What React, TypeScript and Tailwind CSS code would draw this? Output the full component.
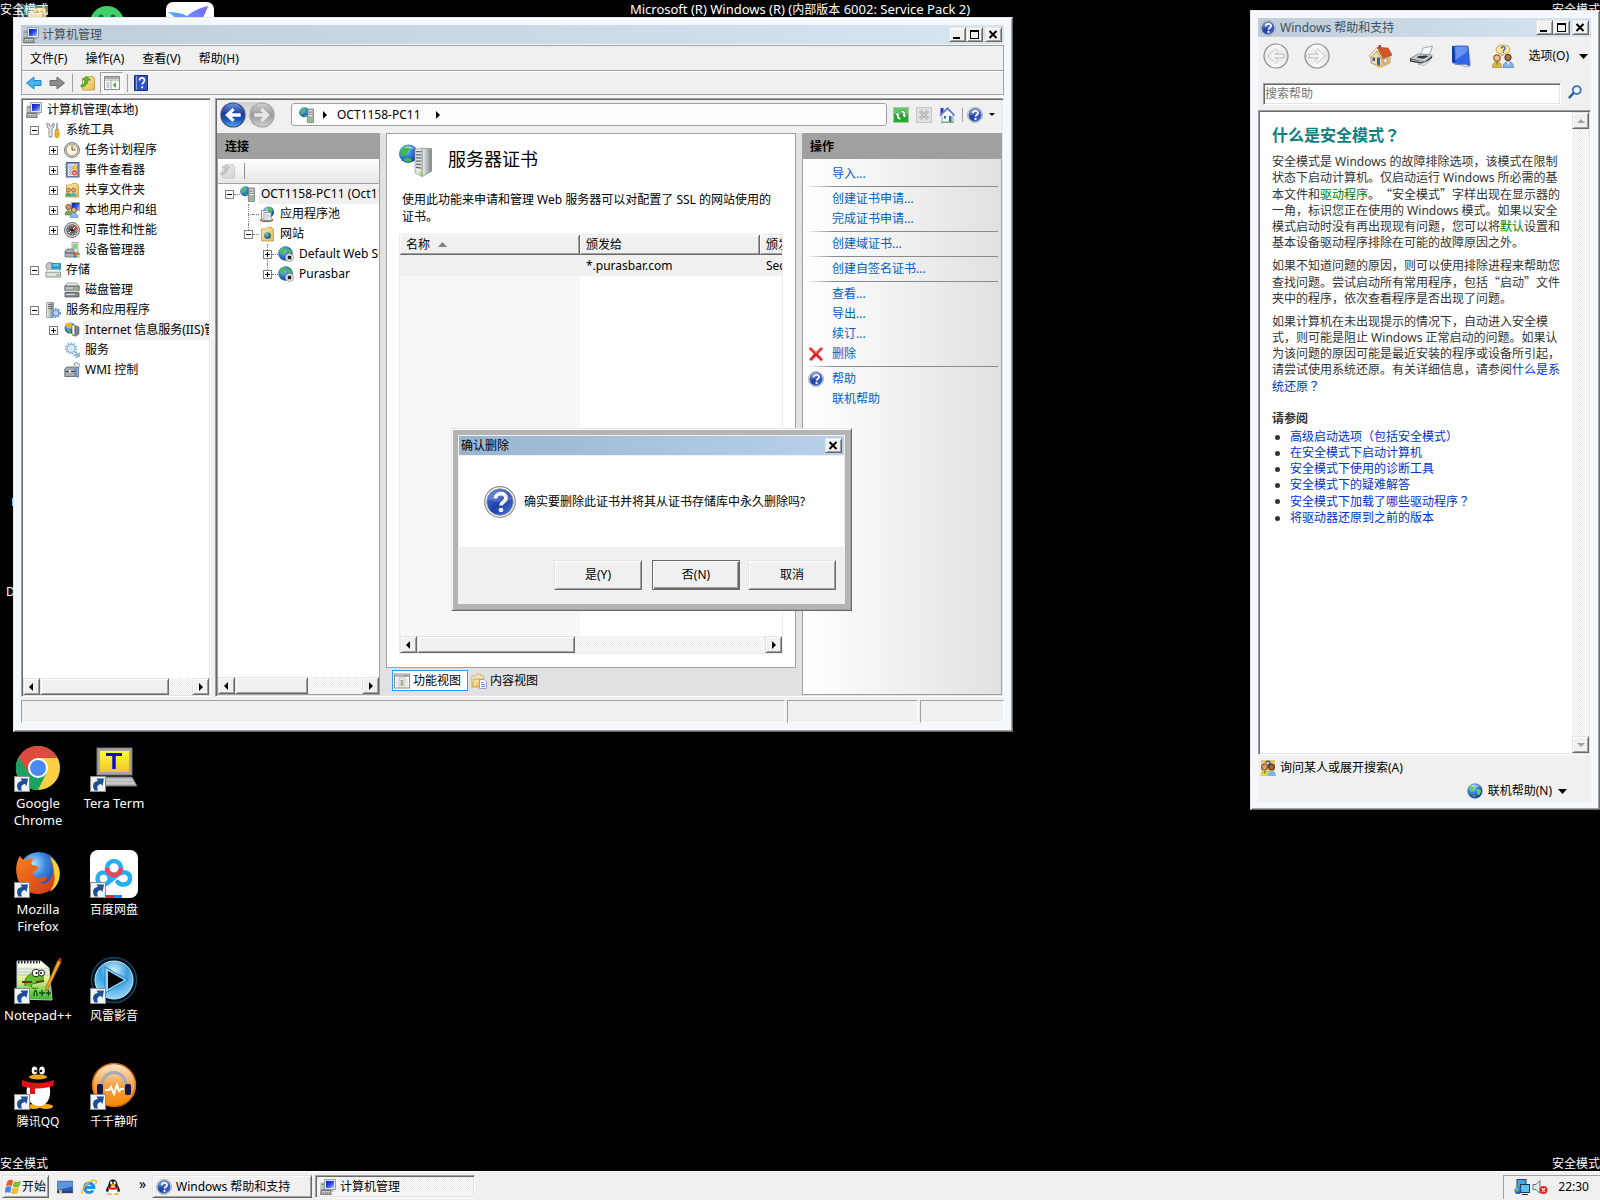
import React from "react";

const raised =
  "border border-t-[#e3e3e3] border-l-[#e3e3e3] border-r-[#696969] border-b-[#696969] shadow-[inset_1px_1px_#fff,inset_-1px_-1px_#a0a0a0] bg-[#f0f0f0]";
const sunken =
  "border border-t-[#a0a0a0] border-l-[#a0a0a0] border-r-white border-b-white shadow-[inset_1px_1px_#696969,inset_-1px_-1px_#e3e3e3]";
const checker =
  "bg-[repeating-conic-gradient(#ffffff_0_25%,#ebebeb_0_50%)] bg-[length:2px_2px]";
const windowFrame =
  "border border-t-[#e3e3e3] border-l-[#e3e3e3] border-r-[#696969] border-b-[#696969] shadow-[inset_1px_1px_#fff,inset_-1px_-1px_#a0a0a0] bg-[#f4f7fc] p-[7px] pr-2";

type IconProps = { className?: string };

/* Gradients shared by every icon */
function Defs() {
  return (
    <svg className="absolute size-0" aria-hidden="true">
      <defs>
        <linearGradient id="blue" x1="0" y1="0" x2="0" y2="1">
          <stop offset="0" stopColor="#6b97e0" />
          <stop offset=".45" stopColor="#1b3b9c" />
          <stop offset=".7" stopColor="#1d55c0" />
          <stop offset="1" stopColor="#4fb0f5" />
        </linearGradient>
        <linearGradient id="help" x1="0" y1="0" x2="1" y2="1">
          <stop offset="0" stopColor="#5f86dd" />
          <stop offset=".5" stopColor="#1d3ea6" />
          <stop offset="1" stopColor="#4a78dc" />
        </linearGradient>
        <linearGradient id="screen" x1="0" y1="0" x2="1" y2="1">
          <stop offset="0" stopColor="#0a17b0" />
          <stop offset=".5" stopColor="#2a49ea" />
          <stop offset="1" stopColor="#b7ccff" />
        </linearGradient>
        <linearGradient id="folder" x1="0" y1="0" x2="1" y2="1">
          <stop offset="0" stopColor="#fdeeb0" />
          <stop offset="1" stopColor="#e3b850" />
        </linearGradient>
        <linearGradient id="metal" x1="0" y1="0" x2="1" y2="0">
          <stop offset="0" stopColor="#f1f3f4" />
          <stop offset="1" stopColor="#7d8588" />
        </linearGradient>
        <radialGradient id="globe" cx=".35" cy=".3" r=".8">
          <stop offset="0" stopColor="#b9e4ff" />
          <stop offset=".4" stopColor="#3a86e0" />
          <stop offset="1" stopColor="#0d2f8c" />
        </radialGradient>
        <linearGradient id="gray" x1="0" y1="0" x2="0" y2="1">
          <stop offset="0" stopColor="#cfcfcf" />
          <stop offset=".5" stopColor="#9a9a9a" />
          <stop offset="1" stopColor="#d2d2d2" />
        </linearGradient>
        <linearGradient id="pale" x1="0" y1="0" x2="0" y2="1">
          <stop offset="0" stopColor="#ffffff" />
          <stop offset=".5" stopColor="#e2e2e2" />
          <stop offset="1" stopColor="#ffffff" />
        </linearGradient>
        <linearGradient id="orange" x1="0" y1="0" x2="0" y2="1">
          <stop offset="0" stopColor="#ffe9d2" />
          <stop offset=".5" stopColor="#f2a24a" />
          <stop offset="1" stopColor="#f88600" />
        </linearGradient>
        <radialGradient id="media" cx=".5" cy=".25" r=".8">
          <stop offset="0" stopColor="#d6f0ff" />
          <stop offset=".45" stopColor="#3b9ee0" />
          <stop offset="1" stopColor="#9fe0ff" />
        </radialGradient>
        <linearGradient id="fox" x1="0" y1="0" x2="1" y2="1">
          <stop offset="0" stopColor="#f58220" />
          <stop offset=".6" stopColor="#e2521b" />
          <stop offset="1" stopColor="#c8371a" />
        </linearGradient>
        <linearGradient id="yellow" x1="0" y1="0" x2="0" y2="1">
          <stop offset="0" stopColor="#ffff30" />
          <stop offset="1" stopColor="#f2c430" />
        </linearGradient>
        <linearGradient id="note" x1="0" y1="0" x2="0" y2="1">
          <stop offset="0" stopColor="#ffffff" />
          <stop offset=".45" stopColor="#e8f29a" />
          <stop offset="1" stopColor="#35b52a" />
        </linearGradient>
        <linearGradient id="bird" x1="0" y1="0" x2="1" y2="0">
          <stop offset="0" stopColor="#4ab4f8" />
          <stop offset="1" stopColor="#7d6cf5" />
        </linearGradient>
      </defs>
    </svg>
  );
}

function Svg({ className = "size-4", box = "0 0 16 16", children }: IconProps & { box?: string; children: React.ReactNode }) {
  return (
    <svg className={"shrink-0 " + className} viewBox={box} aria-hidden="true">
      {children}
    </svg>
  );
}

function ComputerIcon() {
  return (
    <Svg>
      <rect x="4.500" y=".5" width="11" height="10" fill="#e4e6e8" stroke="#a0a5aa" />
      <rect x="6" y="2" width="8" height="7" fill="url(#screen)" />
      <path d="M1 4h3v7H1z" fill="#c7cbd0" stroke="#85898d" strokeWidth=".7" />
      <path d="M8 10.500h5l1 2H7z" fill="#9da2a6" />
      <path d="M1 11h9l1.500 4.500H.5z" fill="#7d8286" stroke="#565b60" strokeWidth=".6" />
      <path d="M2 12.500h8M1.500 14h9" stroke="#e6e8ea" strokeDasharray="1.500 .6" />
      <path d="M2 5.500h1.500" stroke="#2fb52f" />
    </Svg>
  );
}
function ToolsIcon() {
  return (
    <Svg>
      <path d="M2 1v4l2 1.500V15h3V6.500L9 5V1L7.500 2v2h-3V2z" fill="#e9ebec" stroke="#74797d" strokeWidth=".8" />
      <path d="M12 1v7" stroke="#8b8f93" strokeWidth="1.500" />
      <path d="M10.500 7.500h3v2l.5 1v4l-1 1.200h-2l-1-1.200v-4l.5-1z" fill="#f3b229" stroke="#b97a12" strokeWidth=".6" />
    </Svg>
  );
}
function ClockIcon() {
  return (
    <Svg>
      <circle cx="8" cy="8" r="7.500" fill="#cfd1d3" stroke="#76797c" />
      <circle cx="8" cy="8" r="5.700" fill="#fff6d8" stroke="#8a7f68" strokeWidth=".7" />
      <path d="M8 8V3.500A4.500 4.500 0 0 1 12.500 8z" fill="#f5dc94" />
      <path d="M8 3.700V8h3.500" stroke="#4a5a78" fill="none" />
    </Svg>
  );
}
function EventIcon() {
  return (
    <Svg>
      <rect x="2.500" y=".5" width="12.500" height="14.500" fill="#7d97cc" stroke="#4a5f96" />
      <rect x="4" y="2" width="9" height="12" fill="#dfe8f6" />
      <path d="M5 4h4M5 6h4M5 8h3M5 10h3M5 12h3" stroke="#7f97c4" strokeWidth=".8" />
      <path d="m11 2.500 2.700 4.500H8.300z" fill="#ffd21f" stroke="#b98a00" strokeWidth=".5" />
      <circle cx="10.500" cy="10.800" r="2.700" fill="#e4554a" />
      <path d="m9.500 9.800 2 2m0-2-2 2" stroke="#fff" strokeWidth=".8" />
      <path d="M1 2.500h2.500M1 5.500h2.500M1 8.500h2.500M1 11.500h2.500" stroke="#8e9296" />
    </Svg>
  );
}
function Folder() {
  return <path d="M2.500 3h5l1-1.500h4.500v1.500h1.500v12h-12z" fill="url(#folder)" stroke="#c4993a" strokeWidth=".8" />;
}
function SharedIcon() {
  return (
    <Svg>
      <Folder />
      <circle cx="4.500" cy="8" r="2" fill="#e0a977" stroke="#7b4b22" strokeWidth=".6" />
      <circle cx="9.500" cy="8" r="2" fill="#e0a977" stroke="#7b4b22" strokeWidth=".6" />
      <path d="M1 14.500c0-5 6.500-5 6.500 0z" fill="#53a46c" />
      <path d="M6.500 14.500c0-5 6-5 6 0z" fill="#4fb2bd" />
    </Svg>
  );
}
function UsersIcon() {
  return (
    <Svg>
      <rect x="7.500" y=".5" width="8" height="8" fill="url(#screen)" stroke="#a4a8ac" />
      <circle cx="4.500" cy="5" r="2.700" fill="#d89c63" stroke="#67401c" strokeWidth=".8" />
      <path d="M1 13c0-6 7-6 7 0z" fill="#79a955" stroke="#4e7434" strokeWidth=".5" />
      <circle cx="10" cy="8" r="2.600" fill="#e2b184" stroke="#5c3a1c" strokeWidth=".8" />
      <path d="M6 15.500c0-6.500 8-6.500 8 0z" fill="#86b8ea" stroke="#4673a6" strokeWidth=".5" />
    </Svg>
  );
}
function GaugeIcon() {
  return (
    <Svg>
      <circle cx="8" cy="8" r="7.500" fill="#d8dadb" stroke="#6b6e70" />
      <circle cx="8" cy="8" r="5.800" fill="#5d5f61" />
      <circle cx="8" cy="8" r="4.300" fill="none" stroke="#e7e7e7" strokeDasharray="1.500 1" />
      <path d="M9 2.500A5.500 5.500 0 0 1 13.500 7L11 7.500 9 5z" fill="#e23b2e" />
      <path d="m5 11 6-6" stroke="#fff" />
      <circle cx="8" cy="8" r="1.300" fill="#222" />
    </Svg>
  );
}
function DeviceIcon() {
  return (
    <Svg>
      <path d="M8 .5h6V11H8z" fill="#dfe2e4" stroke="#999da0" strokeWidth=".8" />
      <path d="M9 2h4v5H9z" fill="#8ccb77" />
      <path d="m1 9 2-2h6l1 2v6H1z" fill="#a8b1b8" stroke="#5b646b" strokeWidth=".7" />
      <path d="M1 11h9" stroke="#4b545b" />
      <path d="M10 10.500h2.700v2.500H10z" fill="#e24a2c" />
      <path d="M13 10.500h2.700v2.500H13z" fill="#5ab534" />
      <path d="M10 13.200h2.700v2.500H10z" fill="#2d78d2" />
      <path d="M13 13.200h2.700v2.500H13z" fill="#f2bb22" />
    </Svg>
  );
}
function StorageIcon() {
  return (
    <Svg>
      <circle cx="5" cy="4.500" r="4" fill="#c9cdd0" stroke="#85898d" />
      <circle cx="5" cy="4.500" r="1.300" fill="#fff" stroke="#777" strokeWidth=".5" />
      <rect x="7" y="1.500" width="8.500" height="6" fill="#2aa2cf" stroke="#1b6d8c" strokeWidth=".7" />
      <path d="M8 3h6" stroke="#9fe4f7" />
      <path d="M1 10h14.500v5H1z" fill="#dfe1e2" stroke="#76797b" strokeWidth=".8" />
      <path d="m2 8.500 1-1h11l1 2.500H1z" fill="#f3f4f5" stroke="#a0a3a5" strokeWidth=".5" />
      <rect x="11.500" y="12" width="2.500" height="1.500" fill="#4fd22d" />
    </Svg>
  );
}
function DiskIcon() {
  return (
    <Svg>
      <path d="m1 4 2-3h10l2 3z" fill="#eceded" stroke="#85888a" strokeWidth=".7" />
      <path d="M.8 4h14.500v4.500H.8z" fill="#9c9fa1" stroke="#55585a" strokeWidth=".7" />
      <path d="m1.500 8.500 12.500 0 1 2h-14z" fill="#d2d4d5" />
      <path d="M1 10.500h14V15H1z" fill="#85888a" stroke="#4b4e50" strokeWidth=".7" />
      <path d="M2 6h7M2 12.500h9" stroke="#e4e6e7" />
      <rect x="12" y="5" width="2" height="2" fill="#5fe033" />
    </Svg>
  );
}
function Gear({ cx, cy, r, fill }: { cx: number; cy: number; r: number; fill: string }) {
  return (
    <g>
      <circle cx={cx} cy={cy} r={r} fill="none" stroke={fill} strokeWidth="2" strokeDasharray="1.600 1.300" />
      <circle cx={cx} cy={cy} r={r - 1.3} fill="#eef5fb" stroke={fill} strokeWidth="1.400" />
      <circle cx={cx} cy={cy} r={r / 4} fill="#fff" stroke={fill} strokeWidth=".6" />
    </g>
  );
}
function ServiceAppIcon() {
  return (
    <Svg>
      <path d="M1.500.5h7v15h-7z" fill="url(#metal)" stroke="#80888c" strokeWidth=".7" />
      <path d="M3 2.500h4M3 4.500h4M3 6.500h4" stroke="#687176" />
      <Gear cx={11} cy={11} r={4} fill="#6c9cc9" />
    </Svg>
  );
}
function GearsIcon() {
  return (
    <Svg>
      <Gear cx={7} cy={6.5} r={5.2} fill="#8db9dc" />
      <Gear cx={13} cy={13} r={2.4} fill="#84a9c8" />
    </Svg>
  );
}
function IisIcon() {
  return (
    <Svg>
      <circle cx="6" cy="6" r="5.500" fill="url(#globe)" />
      <path d="M1 1h6l2 3-3 3-3-2z" fill="#f5b81c" />
      <path d="M3 8c2-2 4 0 4 3-2 0-4-1-4-3z" fill="#49bf33" />
      <path d="M8 3h3v11l-3-2z" fill="#eef0f1" stroke="#6c7376" strokeWidth=".6" />
      <path d="M11 3.500 15 5v7l-4 2.500z" fill="#7d8487" stroke="#555b5e" strokeWidth=".6" />
      <path d="M9 12.500v1.500" stroke="#32c832" strokeWidth="1.500" />
    </Svg>
  );
}
function WmiIcon() {
  return (
    <Svg>
      <path d="m.8 7 2-2h7l1.500 2v7.500H.8z" fill="#a4abb1" stroke="#555c63" strokeWidth=".8" />
      <path d="M1 9.500h10" stroke="#41484e" />
      <path d="M5 8.500h2v2H5z" fill="#e7e9ea" />
      <path d="M10 1.500 13 .5l3 2-1 2.500-2 1-2-1z" fill="#dfe2e4" stroke="#7b8287" strokeWidth=".7" />
      <path d="M12 5.500h2.500V15h-2.500z" fill="#8fb6ea" stroke="#375f9c" strokeWidth=".7" />
    </Svg>
  );
}
function ServerIcon() {
  return (
    <Svg>
      <circle cx="5.200" cy="5.200" r="5" fill="url(#globe)" />
      <path d="M1.500 5c0-2.500 2.500-4 4-3.500S5 4 4 6.500 1.500 7 1.500 5zM5 9c.5-1.500 2.500-1.500 3-1s-1 2-3 1.500z" fill="#3fc04a" />
      <rect x="8.300" y="2" width="6.200" height="13.500" fill="#a9b0b3" stroke="#6c7376" strokeWidth=".7" />
      <path d="M9.500 4h4M9.500 6.200h4M9.500 8.400h4" stroke="#f1f3f4" strokeWidth="1.100" />
      <path d="M9.500 5.100h4M9.500 7.300h4" stroke="#5d6568" strokeWidth=".6" />
      <rect x="11.300" y="12.500" width="2.200" height="1.800" fill="#5fe01e" />
    </Svg>
  );
}
function ServerLargeIcon() {
  return (
    <Svg className="size-[33px]" box="0 0 32 32">
      <circle cx="9" cy="9.500" r="9" fill="url(#globe)" />
      <path d="M1.500 9c0-4 4-7.500 8-7 2.500.5 1.500 2.500 0 4s-1.500 4-4 5.500-4 0-4-2.500zM4 15c2-2 7-2 8.500 0S7 19 4 15z" fill="#3fbb3f" />
      <path d="M5 4c3-3 8-2 10 1-4-1-7-1-10-1z" fill="#fff" opacity=".5" />
      <path d="m15.500 5 7-1v27.500l-7-3.500z" fill="#e3e6e7" stroke="#81888b" strokeWidth=".6" />
      <path d="m22.500 4 9 .5v22l-9 5z" fill="url(#metal)" stroke="#6f7679" strokeWidth=".6" />
      <path d="M16.500 7.500h5M16.500 10.500h5M16.500 13.500h5M16.500 16.500h5M16.500 19.500l5 .5M16.500 22.500l5 .8" stroke="#5e6669" strokeWidth="1.200" />
      <rect x="20" y="27" width="2.500" height="2.500" fill="#7cf01e" />
    </Svg>
  );
}
function AppPoolIcon() {
  return (
    <Svg>
      <circle cx="9.500" cy="6" r="5.500" fill="url(#globe)" />
      <path d="M8 2c3-2 5 0 6 3-2 2-4 0-6-3z" fill="#4cc35a" />
      <path d="M1 12c0 4 13 4 13 0v2.500c-2 2-11 2-13 0z" fill="#cd3d33" />
      <rect x="2.500" y="4.500" width="7" height="8.500" fill="#fff" stroke="#8a8f95" />
      <rect x="5" y="6.500" width="7" height="8" fill="#fff" stroke="#8a8f95" />
      <path d="M6.500 9h4M6.500 11h4M6.500 13h3" stroke="#7d98b8" strokeWidth=".8" />
    </Svg>
  );
}
function SitesIcon() {
  return (
    <Svg>
      <Folder />
      <circle cx="8.500" cy="9.500" r="3.300" fill="url(#globe)" />
      <path d="M6 9c1-2 4-2 4 0s-2 3-4 0z" fill="#4cc33a" />
    </Svg>
  );
}
function SiteIcon() {
  return (
    <Svg>
      <circle cx="7.500" cy="7.500" r="7" fill="url(#globe)" stroke="#3a6a8f" strokeWidth=".5" />
      <path d="M2 5c2-4 6-4 6-2s-2 2-2 5-3 1-4-3zM9 3c3 0 5 2 5 4l-3 0z" fill="#4fbe3c" />
      <circle cx="11.500" cy="11.500" r="4" fill="#f4f4f4" stroke="#8c8c8c" strokeWidth=".8" />
      <rect x="9.700" y="9.700" width="3.600" height="3.600" fill="#222" />
    </Svg>
  );
}
function HelpIcon({ className }: IconProps) {
  return (
    <Svg className={className} box="0 0 32 32">
      <circle cx="16" cy="16" r="15.300" fill="#fff" stroke="#8a8a8a" strokeWidth="1.200" />
      <circle cx="16" cy="16" r="13.300" fill="url(#help)" stroke="#9aa0a8" strokeWidth=".8" />
      <path d="M4 13a12.500 12.500 0 0 1 24 0c-8 4-16 4-24 0z" fill="#fff" opacity=".18" />
      <path d="M11.500 12.500c0-6.500 10.500-6.500 10.500-.5 0 4-5 3.800-5 7.500" fill="none" stroke="#f4f5f8" strokeWidth="3.800" />
      <circle cx="17" cy="24" r="2.300" fill="#f4f5f8" />
    </Svg>
  );
}
function ArrowIcon({ gray = false }: { gray?: boolean }) {
  return gray ? (
    <Svg>
      <path d="M1 5.500h7V2l7.500 6L8 14v-3.500H1z" fill="#8e8e8e" stroke="#6d6d6d" />
    </Svg>
  ) : (
    <Svg>
      <path d="M15 5.500H8V2L.5 8 8 14v-3.500h7z" fill="#3fb4ee" stroke="#2384c4" />
    </Svg>
  );
}
function UpFolderIcon({ faded = false }: { faded?: boolean }) {
  return (
    <Svg className={faded ? "size-4 grayscale opacity-50" : "size-4"}>
      <Folder />
      <path d="M1 10c3 0 4-3 4-5H2.500L6.500 1l4 4H8c0 4-3 7-7 7z" fill="#4dc02e" stroke="#2b861a" strokeWidth=".6" />
    </Svg>
  );
}
function PanelIcon() {
  return (
    <Svg>
      <rect x=".5" y="1.500" width="15" height="13" fill="#fff" stroke="#8b8b8b" />
      <path d="M1 2h14v2.500H1z" fill="#a9a9a9" />
      <path d="M1 5.500h14" stroke="#c9c9c9" />
      <path d="M2.500 8h3M2.500 10h3M2.500 12h3" stroke="#8698b5" />
      <path d="M7 5v10" stroke="#a3a3a3" />
      <path d="M12 7v6L8.500 10z" fill="#3cc038" />
    </Svg>
  );
}
function BookHelpIcon() {
  return (
    <Svg>
      <path d="M1.500.5h13v15h-13z" fill="#2d53c4" stroke="#16307c" />
      <path d="M3.500 1v14" stroke="#86a4ef" />
      <path d="M6.500 5.500c0-3.500 5-3.500 5 0 0 2-2.300 2-2.300 4" fill="none" stroke="#fff" strokeWidth="1.700" />
      <circle cx="9.200" cy="12.300" r="1.100" fill="#fff" />
    </Svg>
  );
}
function RefreshIcon() {
  return (
    <Svg>
      <rect x=".5" y=".5" width="15" height="15" fill="#1fae2b" stroke="#a5c9a5" />
      <path d="M1 1h14v6H1z" fill="#63c968" />
      <path d="M1.500 8.500 4.500 5l3 3.500H6c0 1.500.5 2 2 2v2.500c-3 0-4.500-1.500-4.500-4.500z" fill="#fff" stroke="#0f6e18" strokeWidth=".6" />
      <path d="M14.500 7.500 11.500 11l-3-3.500H10c0-1.500-.5-2-2-2V3c3 0 4.500 1.500 4.500 4.500z" fill="#fff" stroke="#0f6e18" strokeWidth=".6" />
    </Svg>
  );
}
function StopIcon() {
  return (
    <Svg>
      <rect x=".5" y=".5" width="15" height="15" fill="#e0e0e0" stroke="#c6c6c6" />
      <path d="m4 4 8 8m0-8-8 8" stroke="#b0b0b0" strokeWidth="3" />
      <path d="m4 4 8 8m0-8-8 8" stroke="#d6d6d6" strokeWidth="1" />
    </Svg>
  );
}
function HomeSmallIcon() {
  return (
    <Svg>
      <path d="M3 7.500 8.500 2.500 14 7.500V15H3z" fill="#f5f6fa" stroke="#7d86a3" strokeWidth=".8" />
      <path d="M1.500 1h3v3.500l-3 3z" fill="#2536b8" />
      <path d="m.8 8.500 7.700-7.500 7 7.500" fill="none" stroke="#5a6fd8" strokeWidth="1.400" />
      <path d="M5 9h2v2.500H5zM10 9h2.500v6H10z" fill="#2a6e9c" />
      <path d="M2 15.500h13" stroke="#7ab06a" />
    </Svg>
  );
}
function DeleteIcon() {
  return (
    <Svg>
      <path d="M2.500 1 8 5.800 13 1l2 1.800L10 8l5 5.500-2 1.800-5-5L3.500 15 1 13.500 5.800 8 .8 3z" fill="#dd1f1c" stroke="#f0a5a0" strokeWidth=".7" />
      <path d="M3 2.500 8 7l4.500-4" fill="none" stroke="#f6756e" strokeWidth="1" />
    </Svg>
  );
}
function FeatureViewIcon() {
  return (
    <Svg>
      <rect x=".5" y="1" width="15" height="14" fill="#fff" stroke="#8c8c8c" />
      <path d="M1 1.500h14V4H1z" fill="#b5b5b5" />
      <path d="M10 2.700h4" stroke="#6d6d6d" strokeDasharray="1 .7" />
      <rect x="5" y="5" width="6" height="9.500" fill="#f4f4e2" stroke="#9a9a9a" strokeWidth=".6" />
      <path d="M6.500 8h3M6.500 10h3M6.500 12h3" stroke="#555" strokeWidth=".9" />
      <path d="M2 7h2M2 9.500h2M2 12h2M12 7h2M12 9.500h2M12 12h2" stroke="#aac2e4" strokeWidth=".9" />
    </Svg>
  );
}
function ContentViewIcon() {
  return (
    <Svg>
      <path d="M.8 3h4l1-2h4v2h3v9H.8z" fill="#f3e6bb" stroke="#c0a461" strokeWidth=".7" />
      <path d="m.8 14 2.200-8h9v8z" fill="url(#folder)" stroke="#b9923d" strokeWidth=".7" />
      <path d="M8.500 6.500h4.500l2.500 2.500v6.500h-7z" fill="#fff" stroke="#8792a5" strokeWidth=".8" />
      <path d="M10 9.500h2.500M10 11.500h4M10 13.500h4" stroke="#5b86c9" strokeWidth=".9" />
    </Svg>
  );
}
function GlobeIcon() {
  return (
    <Svg>
      <circle cx="8" cy="8" r="7.300" fill="url(#globe)" stroke="#325f86" strokeWidth=".5" />
      <path d="M2.500 5c1.500-3 4.500-3.500 5-2S6.500 5 5.500 7.500 2.500 8 2.500 5zM10 6.500c2-1 4 0 4 1.500s-1.500 4.500-2.500 4.500-2.500-5-1.500-6zM6 12c1.500 0 2.500 1 2.500 2-1.500 0-2.500-.8-2.500-2z" fill="#5fcf4c" />
      <path d="M3 3.500c3-3 7-3 10 0-3 1-7 1-10 0z" fill="#fff" opacity=".4" />
    </Svg>
  );
}
function HouseIcon() {
  return (
    <Svg className="size-6" box="0 0 24 24">
      <path d="M3 11 9 7l13 3v9l-9 4-10-4z" fill="#f2d9a4" stroke="#a57b45" strokeWidth=".7" />
      <path d="M13 13.500V23l9-4v-9z" fill="#dcb978" />
      <path d="M10.500 1H13v5h-2.500z" fill="#a6452b" />
      <path d="M9 3.500 20 4l4 7-10 3.500z" fill="#d4572c" stroke="#943a1c" strokeWidth=".6" />
      <path d="M9 3.500 1 12l1.500 1.500L9 7l4.500 8 1-1z" fill="#f7f1e6" stroke="#a76a4a" strokeWidth=".6" />
      <path d="M4.500 13.500h2.500V17H4.500z" fill="#2e62a4" />
      <path d="M9 13.500h3V22l-3-1z" fill="#2b64b0" />
      <path d="M16 15.500 19 14.500V18l-3 1z" fill="#fff" stroke="#9a7a4a" strokeWidth=".5" />
      <path d="M7 21.500 11 24l2-1-4-2.500z" fill="#f0b64a" />
    </Svg>
  );
}
function PrinterIcon() {
  return (
    <Svg className="size-6" box="0 0 24 24">
      <path d="m14 4 9.500-2-3.500 10-9 .5z" fill="#fbfcfd" stroke="#8f949b" strokeWidth=".8" />
      <path d="m1 14.500 8-4.500 12 .5 2.500 1.500-7.500 6z" fill="#c9cccf" stroke="#6c7175" strokeWidth=".7" />
      <path d="m9.500 12 8-.5 2 .8-5 2.500-7-1z" fill="#34383b" />
      <path d="M1 14.500v3L13.500 20l9.500-6v-2l-7.500 6z" fill="#2c3033" />
      <path d="m2 16 11.500 2" stroke="#c4c8cb" />
      <path d="m9 20.500 8-2.500 5-2.500-6.500 6z" fill="#e3e6e9" stroke="#94999d" strokeWidth=".6" />
    </Svg>
  );
}
function BookIcon() {
  return (
    <Svg className="size-6" box="0 0 24 24">
      <path d="m18 4 3 16.500-3 1.500-2-2z" fill="#d8dbe3" stroke="#9a9fb0" strokeWidth=".6" />
      <path d="M2 2h2.500l1 18L2 18.500z" fill="#0f3db0" />
      <path d="M4.500 2H18l1.500 20L16 20.500l-10.500 0z" fill="#2f66e8" stroke="#1a3da0" strokeWidth=".7" />
      <path d="M5 2.500h12.500v5L5.500 16z" fill="#7ea6f8" opacity=".7" />
      <path d="M2 18.500 16.500 23l3-1-3.500-1.500H5.500z" fill="#e8ebf4" stroke="#7684b4" strokeWidth=".6" />
    </Svg>
  );
}
function PeopleIcon({ className = "size-6" }: IconProps) {
  return (
    <Svg className={className} box="0 0 24 24">
      <path d="M5 5.500C5-.5 19-.5 19 5.500c0 3-3 4.500-6 4.500l-2 2-.5-2.200C7 9.500 5 8 5 5.500z" fill="#fae4a0" stroke="#b98e3c" strokeWidth=".8" />
      <path d="M10.500 4.500c0-2.500 3.500-2.500 3.500 0 0 1.200-1.700 1.200-1.700 2.500" stroke="#2a56b8" strokeWidth="1.300" fill="none" />
      <circle cx="12.300" cy="8.300" r=".8" fill="#2a56b8" />
      <circle cx="6" cy="14" r="3.200" fill="#eec193" stroke="#a3581f" strokeWidth="1.200" />
      <path d="M1.500 23.500c0-8 9-8 9 0z" fill="#dfb439" stroke="#9c771c" strokeWidth=".6" />
      <circle cx="17" cy="13.500" r="3.200" fill="#a7734b" stroke="#4a2c18" strokeWidth="1" />
      <path d="M12 23.500c0-8 10.500-8 10.500 0z" fill="#7fb4e6" stroke="#3f74ab" strokeWidth=".6" />
      <path d="M5 18h2l-1 4z" fill="#4d8f3c" />
      <path d="M16 17.500h2.500l-1 4z" fill="#fff" />
    </Svg>
  );
}
function AskIcon() {
  return (
    <Svg>
      <rect x="1" y="0" width="14" height="15" fill="#e9c671" />
      <path d="M6 3c0-2.500 4-2.500 4 0 0 1.500-2 1.500-2 3" fill="none" stroke="#2a56b8" strokeWidth="1.400" />
      <circle cx="4.500" cy="7" r="3" fill="#d9a06c" stroke="#7a3d12" strokeWidth="1" />
      <circle cx="11.500" cy="7" r="3" fill="#9b6740" stroke="#3c2212" strokeWidth="1" />
      <path d="M.5 16c0-7 8-7 8 0z" fill="#e8cf3a" />
      <path d="M7.500 16c0-7 8.500-7 8.500 0z" fill="#7fb4e6" />
      <path d="m3.500 11 1.500 3 1-3z" fill="#4d8f3c" />
    </Svg>
  );
}
function SearchIcon() {
  return (
    <Svg className="size-3.5">
      <circle cx="10" cy="5.800" r="4.500" fill="#f4f8fd" stroke="#3d74c4" strokeWidth="2.200" />
      <path d="m6.500 9-5.500 6" stroke="#2d5aa4" strokeWidth="2.600" />
    </Svg>
  );
}
function NavCircle({ dir, tone }: { dir: "back" | "forward"; tone: "blue" | "gray" | "pale" }) {
  const fill = tone === "blue" ? "url(#blue)" : tone === "gray" ? "url(#gray)" : "url(#pale)";
  const stroke = tone === "blue" ? "#3a4f78" : tone === "gray" ? "#a6a6a6" : "#8f8f8f";
  const arrow = tone === "pale" ? "#f6f6f6" : tone === "gray" ? "#e9e9e9" : "#ffffff";
  const line = tone === "pale" ? "#b9b9b9" : "none";
  return (
    <Svg className="size-[26px]" box="0 0 26 26">
      <circle cx="13" cy="13" r="12" fill={fill} stroke={stroke} strokeWidth="1.200" />
      {dir === "back" ? (
        <path d="M5 13l7.500-7 2.200 2.200-3 3.100h9v3.400h-9l3 3.100-2.200 2.200z" fill={arrow} stroke={line} strokeWidth=".8" />
      ) : (
        <path d="M21 13l-7.500-7-2.200 2.200 3 3.100h-9v3.400h9l-3 3.100 2.200 2.200z" fill={arrow} stroke={line} strokeWidth=".8" />
      )}
    </Svg>
  );
}
function Triangle({ dir, className = "" }: { dir: "left" | "right" | "up" | "down"; className?: string }) {
  const d = { left: "M5 0v8L1 4z", right: "M2 0v8l4-4z", up: "M0 6h8L4 2z", down: "M0 2h8L4 6z" }[dir];
  return (
    <svg className={"size-2 shrink-0 " + className} viewBox="0 0 8 8" fill="currentColor" aria-hidden="true">
      <path d={d} />
    </svg>
  );
}

/* Title bar controls */
function CaptionButton({ kind, className = "" }: { kind: "min" | "max" | "close"; className?: string }) {
  const label = { min: "最小化", max: "最大化", close: "关闭" }[kind];
  return (
    <button type="button" aria-label={label} className={"grid h-[15px] w-[17px] place-items-center " + raised + " " + className}>
      <svg className="size-[11px]" viewBox="0 0 11 11" aria-hidden="true">
        {kind === "min" && <path d="M1 8h7v2H1z" />}
        {kind === "max" && <path d="M1 1h9v9H1zM2 3v6h7V3z" fillRule="evenodd" />}
        {kind === "close" && <path d="m1.500 2 7 7M8.500 2l-7 7" stroke="#000" strokeWidth="2" />}
      </svg>
    </button>
  );
}
function Captions() {
  return (
    <div className="ml-auto flex pr-0.5">
      <CaptionButton kind="min" />
      <CaptionButton kind="max" />
      <CaptionButton kind="close" className="ml-0.5" />
    </div>
  );
}

function HScroll({ thumb }: { thumb: string }) {
  return (
    <div className={"flex h-[17px] shrink-0 " + checker}>
      <button type="button" aria-label="向左滚动" className={"grid w-[17px] place-items-center " + raised}>
        <Triangle dir="left" />
      </button>
      <div className={thumb + " " + raised} />
      <button type="button" aria-label="向右滚动" className={"ml-auto grid w-[17px] place-items-center " + raised}>
        <Triangle dir="right" />
      </button>
    </div>
  );
}

/* Tree rows */
const indent = ["pl-[3px]", "pl-[7px]", "pl-[26px]", "pl-[45px]"];
const railLeft = ["left-2", "left-[11px]", "left-[30px]", "left-[49px]"];
type Row = {
  level: number;
  label: string;
  icon: React.ReactNode;
  open?: boolean;
  selected?: boolean;
  rail?: "full" | "half";
};
function TreeRow({ row, lines }: { row: Row; lines?: boolean }) {
  const dots = lines ? "border-t border-dotted border-[#808080]" : "";
  return (
    <li role="treeitem" aria-selected={!!row.selected} className={"relative flex h-5 items-center " + indent[row.level]}>
      {row.rail && (
        <span
          className={
            "absolute top-0 border-l border-dotted border-[#808080] " +
            railLeft[row.level] +
            (row.rail === "full" ? " h-full" : " h-1/2")
          }
        />
      )}
      {row.level > 0 &&
        (row.open === undefined ? (
          <span className={"ml-1 w-[5px] shrink-0 " + dots} />
        ) : (
          <button
            type="button"
            aria-label={row.open ? "折叠" : "展开"}
            className="relative grid size-[9px] shrink-0 place-items-center border border-[#808080] bg-white"
          >
            <svg className="size-[7px]" viewBox="0 0 7 7" aria-hidden="true">
              <path d={row.open ? "M1 3h5v1H1z" : "M1 3h2V1h1v2h2v1H4v2H3V4H1z"} />
            </svg>
          </button>
        ))}
      {row.level > 0 && <span className={"w-1.5 shrink-0 " + dots} />}
      {row.icon}
      <span className={"ml-[3px] flex h-5 items-center pl-0.5 whitespace-nowrap " + (row.selected ? "grow bg-[#f0f0f0]" : "")}>{row.label}</span>
    </li>
  );
}

const leftTree: Row[] = [
  { level: 0, label: "计算机管理(本地)", icon: <ComputerIcon /> },
  { level: 1, label: "系统工具", icon: <ToolsIcon />, open: true },
  { level: 2, label: "任务计划程序", icon: <ClockIcon />, open: false },
  { level: 2, label: "事件查看器", icon: <EventIcon />, open: false },
  { level: 2, label: "共享文件夹", icon: <SharedIcon />, open: false },
  { level: 2, label: "本地用户和组", icon: <UsersIcon />, open: false },
  { level: 2, label: "可靠性和性能", icon: <GaugeIcon />, open: false },
  { level: 2, label: "设备管理器", icon: <DeviceIcon /> },
  { level: 1, label: "存储", icon: <StorageIcon />, open: true },
  { level: 2, label: "磁盘管理", icon: <DiskIcon /> },
  { level: 1, label: "服务和应用程序", icon: <ServiceAppIcon />, open: true },
  { level: 2, label: "Internet 信息服务(IIS)管理器", icon: <IisIcon />, open: false, selected: true },
  { level: 2, label: "服务", icon: <GearsIcon /> },
  { level: 2, label: "WMI 控制", icon: <WmiIcon /> },
];
const iisTree: Row[] = [
  { level: 1, label: "OCT1158-PC11 (Oct1158)", icon: <ServerIcon />, open: true, selected: true },
  { level: 2, label: "应用程序池", icon: <AppPoolIcon />, rail: "full" },
  { level: 2, label: "网站", icon: <SitesIcon />, open: true, rail: "half" },
  { level: 3, label: "Default Web Site", icon: <SiteIcon />, open: false, rail: "full" },
  { level: 3, label: "Purasbar", icon: <SiteIcon />, open: false, rail: "half" },
];

type Action = { label: string; icon?: React.ReactNode };
const actionGroups: Action[][] = [
  [{ label: "导入..." }],
  [{ label: "创建证书申请..." }, { label: "完成证书申请..." }],
  [{ label: "创建域证书..." }],
  [{ label: "创建自签名证书..." }],
  [{ label: "查看..." }, { label: "导出..." }, { label: "续订..." }, { label: "删除", icon: <DeleteIcon /> }],
  [{ label: "帮助", icon: <HelpIcon /> }, { label: "联机帮助" }],
];

function PaneHeader({ children }: { children: React.ReactNode }) {
  return <h2 className="flex h-[26px] shrink-0 items-center bg-[#a0a0a0] pt-0.5 pl-[7px] font-bold">{children}</h2>;
}

function Connections() {
  return (
    <section className="flex w-[163px] shrink-0 flex-col overflow-hidden border-r border-b border-l border-[#a0a0a0] bg-white">
      <PaneHeader>连接</PaneHeader>
      <div className="flex h-[25px] shrink-0 items-center gap-2 border-b border-[#a0a0a0] bg-linear-to-b from-white to-[#e6e6e6] pl-0.5">
        <button type="button" aria-label="向上" disabled>
          <UpFolderIcon faded />
        </button>
        <span className="h-4 w-px bg-[#909090]" />
      </div>
      <ul role="tree" aria-label="连接" className="grow">
        {iisTree.map((row) => (
          <TreeRow key={row.label} row={row} lines />
        ))}
      </ul>
      <HScroll thumb="w-[73px]" />
    </section>
  );
}

const th = "h-5 border-r border-b border-r-[#696969] border-b-[#696969] bg-[#f0f0f0] pl-1.5 text-left font-normal shadow-[inset_1px_1px_#fff,inset_-1px_-1px_#a0a0a0]";

function Certificates() {
  return (
    <div className="flex min-w-0 grow flex-col">
      <section className="flex grow flex-col border border-[#a0a0a0] bg-white px-3 pt-2.5 pb-[13px]">
        <div className="flex h-[34px] items-start">
          <ServerLargeIcon />
          <h1 className="pl-4 text-[18px] leading-[30px]">服务器证书</h1>
        </div>
        <p className="mt-[13px] pl-[3px] leading-[17px]">
          使用此功能来申请和管理 Web 服务器可以对配置了 SSL 的网站使用的
          <br />
          证书。
        </p>
        <div className="mt-[9px] flex grow flex-col overflow-hidden border border-[#ebebeb]">
          <div className="grow overflow-hidden bg-[linear-gradient(to_right,#f7f7f7_180px,#fff_180px)]">
            <table className="w-[540px] table-fixed border-separate border-spacing-0">
              <thead>
                <tr>
                  <th scope="col" className={th}>
                    <span className="flex items-center gap-2">
                      名称
                      <svg className="h-[5px] w-[9px]" viewBox="0 0 9 5" aria-hidden="true"><path d="M0 5h9L4.500 0z" fill="#808080" /></svg>
                    </span>
                  </th>
                  <th scope="col" className={th}>颁发给</th>
                  <th scope="col" className={th}>颁发者</th>
                </tr>
              </thead>
              <tbody>
                <tr className="h-[21px] bg-[#f0f0f0]">
                  <td />
                  <td className="pl-1.5">*.purasbar.com</td>
                  <td className="pl-1.5">Sectigo</td>
                </tr>
              </tbody>
            </table>
          </div>
          <HScroll thumb="w-[158px]" />
        </div>
      </section>
      <div className="flex h-[27px] items-start gap-[3px] pt-0.5 pl-1.5" role="tablist">
        <button type="button" role="tab" aria-selected="true" className="flex h-[21px] items-center gap-[3px] border border-[#3399ff] bg-white pr-1.5 pl-px">
          <FeatureViewIcon />
          功能视图
        </button>
        <button type="button" role="tab" aria-selected="false" className="flex h-[21px] items-center gap-[3px]">
          <ContentViewIcon />
          内容视图
        </button>
      </div>
    </div>
  );
}

function Actions() {
  return (
    <section className="flex w-[200px] shrink-0 flex-col border-r border-b border-l border-[#a0a0a0] bg-linear-to-r from-white to-[#e1e1e1]">
      <PaneHeader>操作</PaneHeader>
      <div className="pt-[5px] pr-[3px] pl-0.5">
        {actionGroups.map((group, i) => (
          <React.Fragment key={i}>
            {i > 0 && <div className="my-0.5 h-px bg-linear-to-r from-transparent to-[#8a8a8a] to-15%" />}
            <ul>
              {group.map((a) => (
                <li key={a.label} className="flex h-5 items-center pl-[3px]">
                  <span className="w-6 shrink-0">{a.icon}</span>
                  <a href="#" className="text-[#0060c8]">{a.label}</a>
                </li>
              ))}
            </ul>
          </React.Fragment>
        ))}
      </div>
    </section>
  );
}

function ManagementWindow() {
  const panel = "h-[23px] border border-t-[#a0a0a0] border-l-[#a0a0a0] border-r-white border-b-white";
  return (
    <section aria-label="计算机管理" className={"absolute top-[17px] left-[13px] w-[62.5vw] min-w-[900px] " + windowFrame}>
      <header className="flex h-[19px] items-center bg-linear-to-r from-[#bfcddb] to-[#d7e4f2] pl-0.5 text-[#434e54]">
        <ComputerIcon />
        <span className="pl-[3px]">计算机管理</span>
        <Captions />
      </header>
      <div className="mt-px border border-[#a0a0a0] bg-[#f0f0f0]">
        <nav className="flex h-[25px] items-center gap-[18px] border-b border-[#a0a0a0] pt-px pl-2">
          {["文件(F)", "操作(A)", "查看(V)", "帮助(H)"].map((m) => (
            <button type="button" key={m}>{m}</button>
          ))}
        </nav>
        <div className="flex h-[23px] items-center border-t border-white pl-1">
          <button type="button" aria-label="后退"><ArrowIcon /></button>
          <button type="button" aria-label="前进" className="ml-[7px]"><ArrowIcon gray /></button>
          <span className="mx-[7px] h-[18px] w-px bg-[#a0a0a0]" />
          <button type="button" aria-label="向上"><UpFolderIcon /></button>
          <button type="button" aria-label="显示/隐藏控制台树" className={"ml-1 grid h-[22px] w-[23px] place-items-center border border-t-[#a0a0a0] border-l-[#a0a0a0] border-r-white border-b-white " + checker}>
            <PanelIcon />
          </button>
          <span className="mr-[5px] ml-1 h-[18px] w-px bg-[#a0a0a0]" />
          <button type="button" aria-label="帮助"><BookHelpIcon /></button>
        </div>
      </div>
      <div className="mt-[3px] flex min-h-[599px] bg-[#f0f0f0]">
        <section className={"flex w-[190px] shrink-0 flex-col overflow-hidden bg-white p-px " + sunken}>
          <ul role="tree" aria-label="控制台树" className="grow overflow-hidden">
            {leftTree.map((row) => (
              <TreeRow key={row.label} row={row} />
            ))}
          </ul>
          <HScroll thumb="w-[129px]" />
        </section>
        <div className={"ml-1 flex min-w-0 grow flex-col bg-[#e1e1e1] p-px " + sunken}>
          <div className="flex h-[33px] shrink-0 items-center bg-[#f0f0f0] pb-1 pl-[3px]">
            <div className="flex gap-[3px] rounded-full bg-linear-to-b from-[#d0d0d0] to-[#f0f0f0]">
              <button type="button" aria-label="后退"><NavCircle dir="back" tone="blue" /></button>
              <button type="button" aria-label="前进"><NavCircle dir="forward" tone="gray" /></button>
            </div>
            <div className="ml-4 flex h-[23px] grow items-center rounded-[3px] border border-[#a0a0a0] bg-[#fdfdfd] pl-[7px]">
              <ServerIcon />
              <Triangle dir="right" className="mr-2 ml-1.5" />
              <span>OCT1158-PC11</span>
              <Triangle dir="right" className="ml-[13px]" />
            </div>
            <div className="flex items-center pr-[7px] pl-1.5">
              <button type="button" aria-label="刷新"><RefreshIcon /></button>
              <button type="button" aria-label="停止" className="ml-[7px]"><StopIcon /></button>
              <button type="button" aria-label="主页" className="ml-[7px]"><HomeSmallIcon /></button>
              <span className="ml-[7px] h-3.5 w-px bg-[#a0a0a0]" />
              <button type="button" aria-label="帮助" className="ml-1 flex items-center gap-1.5">
                <HelpIcon />
                <svg className="size-[6px]" viewBox="0 0 6 6" aria-hidden="true"><path d="M0 1h6L3 4z" /></svg>
              </button>
            </div>
          </div>
          <div className="flex grow gap-1.5">
            <Connections />
            <Certificates />
            <Actions />
          </div>
        </div>
      </div>
      <footer className="flex gap-0.5 bg-[#f0f0f0] pt-[3px] pb-px">
        <div className={"grow " + panel} />
        <div className={"w-[131px] " + panel} />
        <div className={"w-[84px] " + panel} />
      </footer>
    </section>
  );
}

function ConfirmDialog() {
  const btn = "h-[30px] w-[88px] ";
  return (
    <section
      role="dialog"
      aria-labelledby="confirm-title"
      className="absolute top-[428px] left-[451px] w-[401px] border border-t-[#e3e3e3] border-l-[#e3e3e3] border-r-[#696969] border-b-[#696969] bg-[#b4b4b4] p-1.5 shadow-[inset_1px_1px_#fff,inset_-1px_-1px_#a0a0a0]"
    >
      <div className="border border-[#f0f0f0] bg-[#f0f0f0]">
        <header className="flex h-[19px] items-center bg-linear-to-r from-[#99b4d1] to-[#b9d1ea] pl-0.5">
          <h2 id="confirm-title">确认删除</h2>
          <CaptionButton kind="close" className="mr-0.5 ml-auto" />
        </header>
        <div className="mt-px flex h-[91px] items-center gap-2 bg-white pl-[25px]">
          <HelpIcon className="size-8" />
          <p>确实要删除此证书并将其从证书存储库中永久删除吗?</p>
        </div>
        <div className="flex justify-end pt-[13px] pr-2 pb-[13px]">
          <button type="button" className={btn + raised}>是(Y)</button>
          <button type="button" className="ml-2.5 h-[30px] w-[88px] border border-[#696969] bg-[#f0f0f0] shadow-[inset_1px_1px_#fff,inset_-1px_-1px_#696969,inset_-2px_-2px_#a0a0a0]">
            否(N)
          </button>
          <button type="button" className={"ml-2 " + btn + raised}>取消</button>
        </div>
      </div>
    </section>
  );
}

/* Full-width punctuation: quotes, and the centred question mark */
function Quote({ children }: { children: React.ReactNode }) {
  return <span className="font-['Noto_Sans_CJK_SC',sans-serif]">{children}</span>;
}
function Question() {
  return <span lang="ja" className="font-['Noto_Sans_CJK_JP',sans-serif]">？</span>;
}

const seeAlso: React.ReactNode[] = [
  "高级启动选项（包括安全模式）",
  "在安全模式下启动计算机",
  "安全模式下使用的诊断工具",
  "安全模式下的疑难解答",
  <>安全模式下加载了哪些驱动程序<Question /></>,
  "将驱动器还原到之前的版本",
];

function HelpWindow() {
  return (
    <section aria-label="Windows 帮助和支持" className={"absolute top-2.5 right-0 w-[350px] " + windowFrame}>
      <header className="flex h-[19px] items-center bg-linear-to-r from-[#bfcddb] to-[#d7e4f2] pl-0.5 text-[#434e54]">
        <HelpIcon />
        <span className="pl-1">Windows 帮助和支持</span>
        <Captions />
      </header>
      <div className="bg-[#f0f0f0]">
        <div className="flex h-[39px] items-center pr-[3px] pb-px pl-[5px]">
          <button type="button" aria-label="后退"><NavCircle dir="back" tone="pale" /></button>
          <button type="button" aria-label="前进" className="ml-[15px]"><NavCircle dir="forward" tone="pale" /></button>
          <div className="ml-auto flex items-center gap-[17px]">
            <button type="button" aria-label="主页"><HouseIcon /></button>
            <button type="button" aria-label="打印"><PrinterIcon /></button>
            <button type="button" aria-label="浏览帮助"><BookIcon /></button>
            <button type="button" aria-label="询问"><PeopleIcon /></button>
          </div>
          <button type="button" className="ml-[13px] flex items-center gap-2.5">
            选项(O)
            <svg className="h-[5px] w-[9px]" viewBox="0 0 9 5" aria-hidden="true"><path d="M0 0h9L4.500 5z" /></svg>
          </button>
        </div>
        <form className="flex items-center pt-[7px] pr-[9px] pl-[5px]" role="search">
          <input
            type="text"
            aria-label="搜索帮助"
            placeholder="搜索帮助"
            className={"h-[22px] min-w-0 grow bg-white px-px pb-0.5 placeholder:text-[#767676] " + sunken}
          />
          <button type="button" aria-label="搜索" className="ml-[7px] pb-1"><SearchIcon /></button>
        </form>
        <div className={"mt-[5px] flex min-h-[645px] bg-white p-px " + sunken}>
          <article className="grow pt-2.5 pl-3 text-[#333] whitespace-nowrap [text-spacing-trim:space-all]">
            <h1 className="text-base leading-6 font-bold text-[#0e8080]">什么是安全模式<Question /></h1>
            <p className="mt-[7px]">
              安全模式是 Windows 的故障排除选项，该模式在限制<br />
              状态下启动计算机。仅启动运行 Windows 所必需的基<br />
              本文件和<a href="#" className="text-[#008000]">驱动程序</a>。<Quote>“</Quote>安全模式<Quote>”</Quote>字样出现在显示器的<br />
              一角，标识您正在使用的 Windows 模式。如果以安全<br />
              模式启动时没有再出现现有问题，您可以将<a href="#" className="text-[#008000]">默认</a>设置和<br />
              基本设备驱动程序排除在可能的故障原因之外。
            </p>
            <p className="mt-[7px]">
              如果不知道问题的原因，则可以使用排除进程来帮助您<br />
              查找问题。尝试启动所有常用程序，包括<Quote>“</Quote>启动<Quote>”</Quote>文件<br />
              夹中的程序，依次查看程序是否出现了问题。
            </p>
            <p className="mt-[7px]">
              如果计算机在未出现提示的情况下，自动进入安全模<br />
              式，则可能是阻止 Windows 正常启动的问题。如果认<br />
              为该问题的原因可能是最近安装的程序或设备所引起，<br />
              请尝试使用系统还原。有关详细信息，请参阅<a href="#" className="text-[#0033cc]">什么是系<br />统还原<Question /></a>
            </p>
            <h2 className="mt-4 font-bold">请参阅</h2>
            <ul className="mt-0.5">
              {seeAlso.map((t, i) => (
                <li key={i} className="flex items-center">
                  <span className="mr-2.5 ml-[3px] size-[5px] rounded-full bg-[#333]" />
                  <a href="#" className="text-[#0033cc]">{t}</a>
                </li>
              ))}
            </ul>
          </article>
          <div className={"flex w-[17px] shrink-0 flex-col justify-between " + checker}>
            <button type="button" aria-label="向上滚动" className={"grid h-[17px] place-items-center text-[#a0a0a0] " + raised}>
              <Triangle dir="up" />
            </button>
            <button type="button" aria-label="向下滚动" className={"grid h-[17px] place-items-center text-[#a0a0a0] " + raised}>
              <Triangle dir="down" />
            </button>
          </div>
        </div>
        <div className="flex h-[25px] items-center pl-0.5">
          <button type="button" className="flex items-center gap-1">
            <AskIcon />
            询问某人或展开搜索(A)
          </button>
        </div>
        <div className="flex h-[22px] items-center justify-end pr-6">
          <button type="button" className="flex items-center gap-[5px]">
            <GlobeIcon />
            联机帮助(N)
            <svg className="ml-px h-[5px] w-[9px]" viewBox="0 0 9 5" aria-hidden="true"><path d="M0 0h9L4.500 5z" /></svg>
          </button>
        </div>
      </div>
    </section>
  );
}

/* Desktop icons */
function Shortcut() {
  return (
    <svg className="absolute bottom-0 left-0 size-4" viewBox="0 0 16 16" aria-hidden="true">
      <rect x=".5" y=".5" width="15" height="15" fill="#f0f2f5" stroke="#8a8a8a" />
      <path d="M4.500 14.500C1.500 9 3.500 5.500 8 5L6.500 2.500h7.500l-1.500 7.500L11 8C7.500 8.500 6.500 11 8 14.500z" fill="#1d4f96" />
    </svg>
  );
}
function Big({ children }: { children: React.ReactNode }) {
  return <svg className="size-12" viewBox="0 0 48 48" aria-hidden="true">{children}</svg>;
}
const chrome = (
  <Big>
    <circle cx="24" cy="24" r="22" fill="#fdd043" />
    <path d="M24 24 5 13A22 22 0 0 1 43.500 14H24z" fill="#dd4b3e" />
    <path d="M4.500 13.500A22 22 0 0 0 24 46l9-18-9-4z" fill="#1aa260" />
    <path d="M5 13 14.500 29 24 14h19.500A22 22 0 0 0 5 13z" fill="#dd4b3e" />
    <circle cx="24" cy="24" r="10" fill="#fff" />
    <circle cx="24" cy="24" r="8" fill="#4a8af4" />
  </Big>
);
const teraTerm = (
  <Big>
    <rect x="7" y="4" width="35" height="27" fill="#a5a5a5" stroke="#777" />
    <rect x="10" y="7" width="29" height="21" fill="url(#yellow)" />
    <path d="M16 9h16v3h-6.300v13h-3.400V12H16z" fill="#0808d8" />
    <path d="M12 33h30l5 9H12z" fill="#b5b5b5" stroke="#6d6d6d" />
    <path d="M14 36h28M14 39h31" stroke="#dadada" />
  </Big>
);
const firefox = (
  <Big>
    <circle cx="25" cy="22" r="20" fill="url(#globe)" />
    <path d="M6 6c1 2 3 4 5 4 3-2 7-2 9-1-3 2-3 5-2 6 3 0 6 1 6 3s-4 3-5 4c-1 3 2 6 6 6 3 0 5-2 8-1 0 3-4 6-9 6 8 3 15-3 15-13 0-5-2-9-4-12 8 5 11 12 10 20A21.500 21.500 0 0 1 3 26C1 18 3 10 6 6z" fill="url(#fox)" />
    <path d="M36 7c8 5 11 13 9.500 20-1 7-5 12-10 15 5-7 6-13 4.500-20 0-6-2-11-4-15z" fill="#fbd22e" />
  </Big>
);
const baidu = (
  <Big>
    <rect width="48" height="48" rx="8" fill="#fff" />
    <circle cx="13.500" cy="28.500" r="6" fill="none" stroke="#25aef3" strokeWidth="4.500" />
    <path d="M18 32.500 28 24.500c7-5 12.500-1 12 4.500-.6 6.500-9 7-12.500 3" fill="none" stroke="#25aef3" strokeWidth="4.500" strokeLinecap="round" />
    <circle cx="24" cy="18" r="7" fill="#fff" stroke="#25aef3" strokeWidth="4.500" />
    <path d="M17 18a7 7 0 0 0 14 0" fill="none" stroke="#f5425c" strokeWidth="4.500" />
    <path d="M16 45h8v3h-8z" fill="#e5263f" />
    <path d="M24 45h8v3h-8z" fill="#1c8bef" />
  </Big>
);
const notepad = (
  <Big>
    <path d="M3 5h24l8 7 3 32-35-1z" fill="url(#note)" stroke="#b9c4d4" />
    <path d="M4 13h30M4 16h30M4 19h30" stroke="#a9c2e6" />
    <path d="M4 6h22" stroke="#222" strokeWidth="3" strokeDasharray="1.500 1.500" />
    <path d="M11 30c-2-8 5-14 12-13 6 0 9 6 3 9-5 2-9 1-9 4s4 3 7 2" fill="#63c22f" stroke="#2b7a18" strokeWidth="1" />
    <path d="M8 26h10m4 0 8-1" stroke="#6b3515" strokeWidth="2" />
    <circle cx="22" cy="17" r="3.800" fill="#fff" stroke="#222" />
    <circle cx="27.500" cy="17" r="3" fill="#fff" stroke="#222" />
    <circle cx="22.500" cy="17" r="1" />
    <circle cx="27" cy="17" r="1" />
    <path d="M20 40c0-7 3-7 3 0m2-3h6m-3-3v6m4-3h5m-2.500-3v6" stroke="#14480f" fill="none" strokeWidth="1.300" />
    <path d="M44 4 47 6 34 33l-2 2v-4z" fill="#f0a42a" stroke="#8c5a14" strokeWidth=".7" />
    <path d="M44 4 45.500 1.500l2.500 1.500L47 6z" fill="#b92222" />
  </Big>
);
const media = (
  <Big>
    <circle cx="24" cy="24" r="22.500" fill="#06121f" stroke="#14425f" strokeWidth="1.500" />
    <circle cx="24" cy="24" r="19" fill="url(#media)" stroke="#cdeeff" strokeWidth="1" />
    <path d="M15 11v26l23-13z" fill="#8fd4fa" stroke="#2a7fb8" strokeWidth="1" />
    <path d="M18 15v18l16-9z" fill="#050505" />
  </Big>
);
const qq = (
  <Big>
    <ellipse cx="20" cy="44.500" rx="7" ry="2.500" fill="#f5a81c" />
    <ellipse cx="32" cy="44.500" rx="7" ry="2.500" fill="#f5a81c" />
    <path d="M14 22h21c3 10 0 22-10 22S10 32 14 22z" fill="#fff" />
    <ellipse cx="20.500" cy="8.500" rx="2.800" ry="4" fill="#fff" />
    <ellipse cx="28" cy="8.500" rx="2.800" ry="4" fill="#fff" />
    <circle cx="21.500" cy="9" r="1.300" />
    <circle cx="27" cy="9" r="1.300" />
    <ellipse cx="24" cy="15" rx="9" ry="2.500" fill="#f3a61b" />
    <path d="M8 18c10 4 22 4 32 0l-1 6c-6 2-13 2.500-18 2.500V32h-5v-6c-3-.5-5-1-8-2z" fill="#e60f16" />
  </Big>
);
const headphone = (
  <Big>
    <circle cx="24" cy="23" r="21.500" fill="url(#orange)" stroke="#d56a10" strokeWidth="1.500" />
    <path d="M12 27C10 5 38 5 36 27" fill="none" stroke="#a3a9b6" strokeWidth="3" />
    <rect x="7" y="22" width="6" height="11" rx="2" fill="#15174a" />
    <rect x="35" y="22" width="6" height="11" rx="2" fill="#15174a" />
    <path d="M15 28h4l2-3 3 7 3-9 2 6 2-2h3" fill="none" stroke="#fff" strokeWidth="2" />
  </Big>
);
const cabinet = (
  <Big>
    <path d="M4 2 20 5v30L4 30z" fill="#32485f" stroke="#8ea3b8" />
    <path d="M10 3h24v10H10z" fill="#4c8a86" />
    <path d="M20 6h12v30H14z" fill="url(#folder)" stroke="#b08f3f" />
    <path d="M5 8c5 3 5 10 2 18" stroke="#a8c8e8" fill="none" strokeWidth="2" />
    <path d="M14 10h15v24H14z" fill="#ede0b4" stroke="#a88d50" />
  </Big>
);
const chat = (
  <Big>
    <circle cx="17" cy="21" r="17" fill="#3fd06c" />
    <circle cx="11" cy="15" r="2.500" fill="#11662d" />
    <circle cx="23" cy="15" r="2.500" fill="#11662d" />
  </Big>
);
const birdApp = (
  <Big>
    <rect width="48" height="48" rx="7" fill="#fff" />
    <path d="M2 10c7 0 14 1 19 4 6-5 12-8 21-10-3 9-8 20-20 26C16 22 9 15 2 10z" fill="url(#bird)" />
  </Big>
);

function DesktopIcon({ art, label, className, shortcut = true }: { art: React.ReactNode; label?: string; className: string; shortcut?: boolean }) {
  return (
    <button type="button" className={"flex flex-col items-center self-start text-white " + className}>
      <span className="relative">
        {art}
        {shortcut && <Shortcut />}
      </span>
      <span className="mt-[3px] leading-[17px] whitespace-pre-line">{label}</span>
    </button>
  );
}

function Desktop() {
  return (
    <div className="grid w-max auto-rows-[106px] grid-cols-[repeat(3,76px)] pt-0.5">
      <DesktopIcon art={cabinet} className="col-start-1 row-start-1" shortcut={false} />
      <DesktopIcon art={chat} className="col-start-2 row-start-1" shortcut={false} />
      <DesktopIcon art={birdApp} className="col-start-3 row-start-1" shortcut={false} />
      <span className="col-start-1 row-start-5 mt-[72px] ml-3 h-2 w-px bg-[#7cc8f8]" />
      <span className="col-start-1 row-start-6 pt-[51px] pl-1.5 leading-[17px] text-white">D</span>
      <DesktopIcon art={chrome} label={"Google\nChrome"} className="col-start-1 row-start-8 text-[13px]" />
      <DesktopIcon art={teraTerm} label="Tera Term" className="col-start-2 row-start-8 text-[13px]" />
      <DesktopIcon art={firefox} label={"Mozilla\nFirefox"} className="col-start-1 row-start-9 text-[13px]" />
      <DesktopIcon art={baidu} label="百度网盘" className="col-start-2 row-start-9" />
      <DesktopIcon art={notepad} label="Notepad++" className="col-start-1 row-start-10 text-[13px]" />
      <DesktopIcon art={media} label="风雷影音" className="col-start-2 row-start-10" />
      <DesktopIcon art={qq} label="腾讯QQ" className="col-start-1 row-start-11" />
      <DesktopIcon art={headphone} label="千千静听" className="col-start-2 row-start-11" />
    </div>
  );
}

function Taskbar() {
  return (
    <footer className="flex h-[29px] shrink-0 items-center border-t border-white bg-[#f0f0f0] pt-px pl-0.5">
      <button type="button" className={"flex h-[23px] w-[47px] items-center justify-center gap-px " + raised}>
        <Svg>
          <path d="M2.500 2c2-1.500 4-1.500 5.500-.5L6.800 7.300C5 6.300 3 6.300 1 7.300z" fill="#e8562a" />
          <path d="M9 2.200c2 1 4.500 1 7-.7l-1.500 5.700c-2.300 1.500-4.500 1.500-6.700.5z" fill="#7dbb33" />
          <path d="M.8 8.300c2-1.200 4-1.200 5.700-.2L5.200 14C3.500 13 1.500 13-.5 14z" fill="#3e8be0" />
          <path d="M7.500 8.700c2 1 4.500 1 6.700-.4L12.700 14c-2.200 1.400-4.300 1.400-6.500.4z" fill="#f5bd2a" />
        </Svg>
        开始
      </button>
      <div className="flex items-center gap-2 pl-2">
        <button type="button" aria-label="显示桌面">
          <Svg>
            <rect x="0" y="2" width="16" height="12" fill="#2a5bb8" stroke="#7d8fa9" strokeWidth=".6" />
            <path d="M.5 2.500h15v5L.5 11z" fill="#5f93dd" />
            <path d="M0 12h16v2H0z" fill="#2e3f5f" />
            <rect x="2" y="11" width="3" height="3" fill="#d8b93c" />
          </Svg>
        </button>
        <button type="button" aria-label="Internet Explorer">
          <Svg>
            <path d="M3.500 8.500h9.300A4.700 4.700 0 1 0 12 11.500" fill="none" stroke="#2b8fe0" strokeWidth="3" />
            <path d="M1.500 14.500C-1 10 9 0 14.500 1.500 16 2 15 4 14.500 5" fill="none" stroke="#f0b92c" strokeWidth="1.400" />
          </Svg>
        </button>
        <button type="button" aria-label="QQ">
          <Svg>
            <path d="M3.500 6C3.500-1.500 12.500-1.500 12.500 6c3 4 3 8 1 6.500l-11 0C.5 14 .5 10 3.500 6z" fill="#111" />
            <ellipse cx="8" cy="11" rx="4.500" ry="4" fill="#fff" />
            <ellipse cx="6.300" cy="3.700" rx="1.200" ry="1.500" fill="#fff" />
            <ellipse cx="9.700" cy="3.700" rx="1.200" ry="1.500" fill="#fff" />
            <ellipse cx="8" cy="6" rx="2.800" ry=".9" fill="#f3a61b" />
            <path d="M3 7.500c3 1.300 7 1.300 10 0V10c-3 1-7 1-10 0z" fill="#e0191c" />
            <path d="M2 15.500c1-2.500 5-1.500 5 .5zM14 15.500c-1-2.500-5-1.500-5 .5z" fill="#f5a81c" />
          </Svg>
        </button>
      </div>
      <span className="ml-[18px] w-[13px] pb-1.5 text-sm leading-4">»</span>
      <button type="button" className={"flex h-[23px] w-40 items-center gap-1 pl-[3px] " + raised}>
        <HelpIcon />
        Windows 帮助和支持
      </button>
      <button type="button" className={"ml-[3px] flex h-[23px] w-40 items-center gap-1 pt-px pl-1 " + sunken + " " + checker}>
        <ComputerIcon />
        计算机管理
      </button>
      <div className="ml-auto flex h-6 items-center border-t border-l border-[#a0a0a0] pr-[11px] pl-2.5">
        <Svg>
          <rect x="3" y=".5" width="9" height="8" fill="#3fa7e8" stroke="#333d55" />
          <rect x="6.500" y="5.500" width="9" height="8" fill="#58c4f2" stroke="#27364f" />
          <path d="M8 15.500h6" stroke="#333" />
          <circle cx="4" cy="11.500" r="3.500" fill="url(#globe)" />
          <path d="M1.500 11c1-2 3-2 3 0s-2 2-3 0z" fill="#4fbe3c" />
        </Svg>
        <Svg className="ml-0.5 size-4">
          <path d="M1 5.500h3l4-4v13l-4-4H1z" fill="#e5e7ea" stroke="#6b7280" />
          <circle cx="11.500" cy="11" r="4" fill="#e02b20" />
          <path d="m10 9.500 3 3m0-3-3 3" stroke="#fff" strokeWidth="1.300" />
        </Svg>
        <time className="pl-2.5">22:30</time>
      </div>
    </footer>
  );
}

export default function App() {
  return (
    <div lang="zh-CN" className="flex min-h-screen cursor-default flex-col overflow-hidden bg-black font-['Noto_Sans','Noto_Sans_CJK_SC',sans-serif] text-xs text-black">
      <Defs />
      <main className="relative grow">
        <Desktop />
        <span className="absolute top-0.5 left-0 text-white">安全模式</span>
        <p className="absolute inset-x-0 top-px text-center text-[13px] leading-4 text-white">
          Microsoft (R) Windows (R) (<span className="text-xs">内部版本</span> 6002: Service Pack 2)
        </p>
        <span className="absolute top-0.5 right-0 text-white">安全模式</span>
        <span className="absolute bottom-0 left-0 leading-[14px] text-white">安全模式</span>
        <span className="absolute right-0 bottom-0 leading-[14px] text-white">安全模式</span>
        <ManagementWindow />
        <HelpWindow />
        <ConfirmDialog />
      </main>
      <Taskbar />
    </div>
  );
}
